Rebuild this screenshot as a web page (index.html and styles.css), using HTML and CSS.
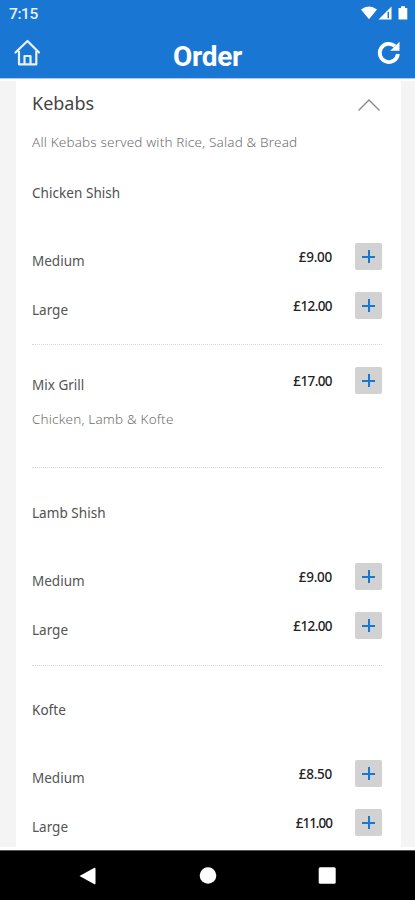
FILE: index.html
```html
<!DOCTYPE html>
<html lang="en">
<head>
<meta charset="utf-8">
<title>Order</title>
<link rel="stylesheet" href="styles.css">
</head>
<body>
<div class="screen">
  <header class="top">
    <div class="status">
      <span class="clock">7:15</span>
      <svg class="signals" width="50" height="16" viewBox="0 0 50 16" fill="#fff">
        <path d="M1 4.4Q9 -1.6 17 4.4L9 14.2Z"/>
        <path d="M18.5 14.5 31.5 1.5V14.5Z"/>
        <path d="M28.3 6.8V13.2" stroke="#1976d2" stroke-width="1.5"/>
        <path d="M38.5 3H41V1.2H45V3H47.3V14.5H38.5Z"/>
      </svg>
    </div>
    <div class="bar">
      <svg class="home" width="28" height="28" viewBox="0 0 28 28" fill="none" stroke="#e8f1fc" stroke-width="2.2" stroke-linejoin="round" stroke-linecap="round">
        <path d="M2.500 13.500 14.500 2 26 13.500"/>
        <path d="M6 12.500V25.300H23.300V12.500"/>
        <path d="M11.500 25V17H17.500V25"/>
      </svg>
      <h1 class="title">Order</h1>
      <svg class="reload" width="26" height="26" viewBox="0 0 26 26" fill="none" stroke="#fff" stroke-width="3.8">
        <path d="M19 6.2A9.100 9.100 0 1 0 21.900 14"/>
        <path d="M23.500 1.800V10.800H14.200Z" fill="#fff" stroke="none"/>
      </svg>
    </div>
  </header>
  <main class="content">
    <div class="card">
      <div class="category">
        <h2>Kebabs</h2>
        <svg width="24" height="14" viewBox="0 0 24 14" fill="none" stroke="#8b8b8b" stroke-width="1.4"><path d="M1.5 12.5 12 2 22.5 12.5"/></svg>
      </div>
      <p class="note">All Kebabs served with Rice, Salad &amp; Bread</p>
      <section class="group first">
        <h3 class="name">Chicken Shish</h3>
        <div class="row"><span class="label">Medium</span><span class="price">£9.00</span><button class="add" aria-label="Add"></button></div>
        <div class="row"><span class="label">Large</span><span class="price wide">£12.00</span><button class="add" aria-label="Add"></button></div>
      </section>
      <section class="group single">
        <div class="row"><span class="label">Mix Grill</span><span class="price wide">£17.00</span><button class="add" aria-label="Add"></button></div>
        <p class="desc">Chicken, Lamb &amp; Kofte</p>
      </section>
      <section class="group lamb">
        <h3 class="name">Lamb Shish</h3>
        <div class="row"><span class="label">Medium</span><span class="price">£9.00</span><button class="add" aria-label="Add"></button></div>
        <div class="row"><span class="label">Large</span><span class="price wide">£12.00</span><button class="add" aria-label="Add"></button></div>
      </section>
      <section class="group kofte">
        <h3 class="name">Kofte</h3>
        <div class="row"><span class="label">Medium</span><span class="price">£8.50</span><button class="add" aria-label="Add"></button></div>
        <div class="row"><span class="label">Large</span><span class="price narrow">£11.00</span><button class="add" aria-label="Add"></button></div>
      </section>
    </div>
  </main>
  <nav class="nav">
    <svg width="18" height="18" viewBox="0 0 18 18" fill="#fff"><path d="M.5 9 15 1Q16.500 .3 16.500 2V16Q16.500 17.700 15 17Z"/></svg>
    <svg width="18" height="18" viewBox="0 0 18 18" fill="#fff"><circle cx="9" cy="8.500" r="8.300"/></svg>
    <svg width="18" height="18" viewBox="0 0 18 18" fill="#fff"><rect x=".7" y=".3" width="17" height="16.500" rx="1.500"/></svg>
  </nav>
</div>
</body>
</html>
```
FILE: styles.css
```css
* { box-sizing: border-box; margin: 0; padding: 0; }
body { background: #fff; font-family: "Noto Sans", sans-serif; overflow: hidden; }
.screen { width: 415px; height: 900px; display: flex; flex-direction: column; overflow: hidden; }
.top { height: 79px; flex: none; background: #1976d2; border-bottom: 1px solid #a9cbf0; }
.status { height: 28px; padding: 5px 5px 0 9px; display: flex; justify-content: space-between; align-items: flex-start; }
.clock { font: 500 15.500px/18px Roboto, sans-serif; letter-spacing: -.4px; color: #e8f1fc; }
.bar { height: 50px; padding: 0 13px; display: grid; grid-template-columns: 28px 1fr 26px; }
.home { margin-top: 11px; }
.reload { margin-top: 12px; }
.title { font: 700 28px/57px Roboto, sans-serif; letter-spacing: -.3px; color: #fff; text-align: center; padding-right: 2px; }
.content { flex: 1; min-height: 0; overflow: hidden; padding: 0 14px 0 16px; background: #f4f4f4; border-top: 2px solid #fff; border-bottom: 3px solid #fff; }
.card { height: 100%; background: #fff; padding: 0 19px 0 16px; overflow: hidden; }
.category { height: 44px; display: flex; align-items: center; justify-content: space-between; padding-right: 1px; }
.category h2 { font-size: 18px; font-weight: 400; line-height: 24px; color: #444; }
.category svg { margin-top: 3px; }
.note, .desc { font-size: 13.500px; font-weight: 300; color: #707070; white-space: nowrap; line-height: 20px; letter-spacing: .17px; }
.note { margin-top: 7px; }
.group { border-bottom: 1px dotted #d8d8d8; }
.first { padding: 31px 0 14px; }
.single { padding: 11px 0 38px; }
.lamb { padding: 35px 0 15px; }
.kofte { padding-top: 34px; border-bottom: 0; }
.name { font-size: 13.500px; font-weight: 400; line-height: 20px; margin-bottom: 29px; color: #505050; letter-spacing: .05px; }
.row { height: 49px; display: grid; grid-template-columns: 1fr auto 27px; column-gap: 23px; align-items: center; }
.label { font-size: 13.500px; line-height: 20px; color: #555; padding-top: 9px; }
.price { font-size: 13.500px; font-weight: 500; line-height: 20px; color: #222; letter-spacing: -.25px; }
.wide { letter-spacing: -.6px; }
.narrow { letter-spacing: -1px; }
.add { width: 27px; height: 27px; border: 0; border-radius: 2px; background: linear-gradient(#1976d2, #1976d2) center / 13px 2px no-repeat, linear-gradient(#1976d2, #1976d2) center / 2px 13px no-repeat, #d2d2d2; }
.desc { margin-top: 4px; }
.nav { height: 50px; flex: none; background: #000; border-top: 1px solid #555; display: flex; justify-content: space-between; align-items: center; padding: 0 79px; }
```
